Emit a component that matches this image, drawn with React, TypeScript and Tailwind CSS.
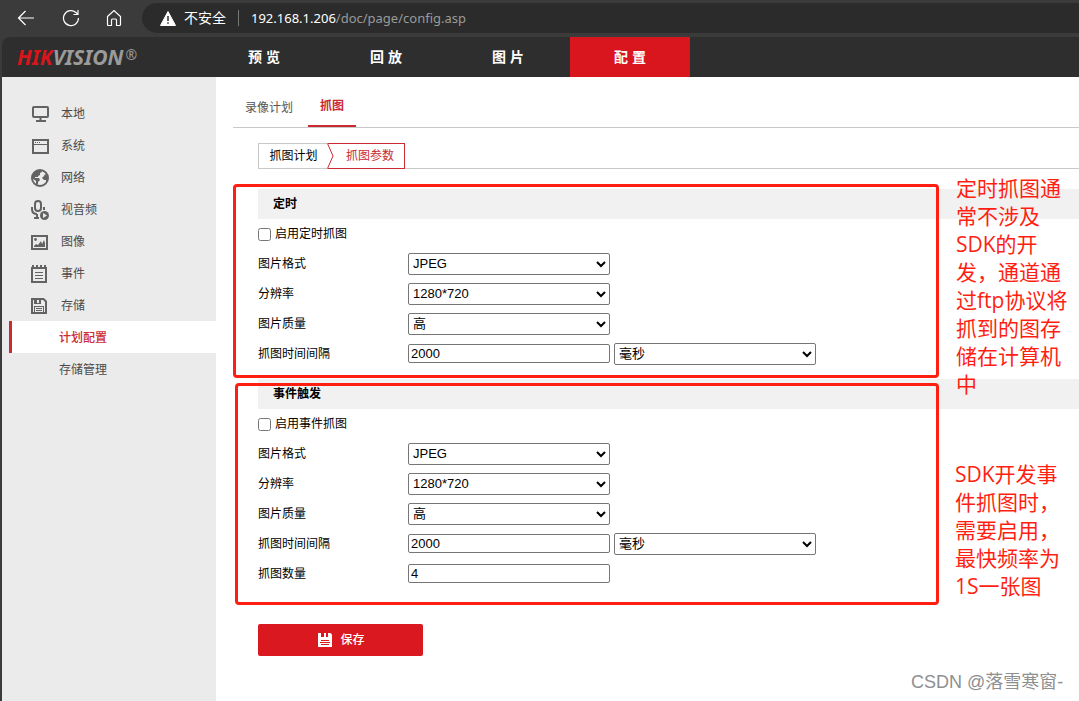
import type { ReactNode } from 'react';

const TOP_NAV = [
  { label: '预 览', active: false },
  { label: '回 放', active: false },
  { label: '图 片', active: false },
  { label: '配 置', active: true },
];

const FloppyIcon = () => (
  <svg width="16" height="16" viewBox="0 0 16 16" fill="none" stroke="currentColor" strokeWidth="2">
    <path d="M1 1h11.5L15 3.5V15H1z" />
    <path d="M3 1h7v5H3z" fill="currentColor" stroke="none" />
    <path d="M6 2h2v3H6z" fill="#ebebeb" stroke="none" />
    <path d="M3 8.5h10M3.5 8v6M12.5 8v6M5 10.5h6M5 12.5h6" strokeWidth="1" />
  </svg>
);

const MENU: { label: string; icon: ReactNode }[] = [
  {
    label: '本地',
    icon: (
      <svg width="18" height="18" viewBox="0 0 18 18" fill="none" stroke="currentColor" strokeWidth="2">
        <rect x="2" y="2" width="15" height="10" rx="1" />
        <path d="M9.5 12v4M5 16h10" />
      </svg>
    ),
  },
  {
    label: '系统',
    icon: (
      <svg width="18" height="18" viewBox="0 0 18 18" fill="none" stroke="currentColor" strokeWidth="2">
        <rect x="2" y="3" width="15" height="13" />
        <path d="M2 7.5h15M4 5.5h1M6 5.5h1M8 5.5h1" strokeWidth="1" />
      </svg>
    ),
  },
  {
    label: '网络',
    icon: (
      <svg width="18" height="18" viewBox="0 0 18 18" fill="currentColor">
        <circle cx="9" cy="9" r="8" fill="none" stroke="currentColor" strokeWidth="2" />
        <path d="M1 8l1-4 4-3h4l1 2-2 1v2L7 7v1H4v1h4l1 2-2 2v3l-2-1v-3L1 9z" />
        <path d="M17 7l-3-2-1 2-2 2 2 2h2v3l2-3z" />
      </svg>
    ),
  },
  {
    label: '视音频',
    icon: (
      <svg width="18" height="20" viewBox="0 0 18 20" fill="none" stroke="currentColor" strokeWidth="2">
        <rect x="4" y="1" width="6" height="10" rx="3" />
        <path d="M1 7v2c0 3 2 5 5 5M13 7v3M6 14v4M3 18h5" />
        <circle cx="13.5" cy="15.5" r="4.5" fill="currentColor" stroke="none" />
        <path d="M12 13v5l4-2.5z" fill="#ebebeb" stroke="none" />
      </svg>
    ),
  },
  {
    label: '图像',
    icon: (
      <svg width="18" height="18" viewBox="0 0 18 18" fill="none" stroke="currentColor" strokeWidth="2">
        <rect x="1" y="3" width="15" height="13" />
        <path d="M3 14v-1l2-2 2 1 3-4 1 3 2-4 1 3v4z" fill="currentColor" stroke="none" />
        <circle cx="4.5" cy="6.5" r="1.4" fill="currentColor" stroke="none" />
      </svg>
    ),
  },
  {
    label: '事件',
    icon: (
      <svg width="18" height="18" viewBox="0 0 18 18" fill="none" stroke="currentColor" strokeWidth="2">
        <path d="M1 3h14v14H1z" />
        <path d="M2 0v3M6 0v3M10 0v3M14 0v3" />
        <path d="M4 7.5h8M4 10.5h8M4 13.5h8" strokeWidth="1" />
      </svg>
    ),
  },
  { label: '存储', icon: <FloppyIcon /> },
];

function BrowserBar() {
  return (
    <div className="flex h-[37px] items-start bg-[#3b3b3b] text-white">
      <div className="flex h-9 w-[142px] shrink-0 items-center justify-between pl-[17px] pr-5">
        <button type="button" aria-label="后退">
          <svg width="18" height="16" viewBox="0 0 18 16" fill="none" stroke="currentColor" strokeWidth="1.2">
            <path d="M17 8H1.5M8.5 1l-7 7 7 7" />
          </svg>
        </button>
        <button type="button" aria-label="刷新">
          <svg width="18" height="18" viewBox="0 0 18 18" fill="none" stroke="currentColor" strokeWidth="1.2">
            <path d="M16.5 9A7.5 7.5 0 1 1 14 3.5l2 2M16 1v4.500h-4.500" />
          </svg>
        </button>
        <button type="button" aria-label="主页">
          <svg width="16" height="18" viewBox="0 0 16 18" fill="none" stroke="currentColor" strokeWidth="1.2">
            <path d="M1.5 7.5L8 1.5l6.5 6v8q0 1-1 1h-3V11q0-1-1-1h-3q-1 0-1 1v5.5h-3q-1 0-1-1z" />
          </svg>
        </button>
      </div>
      <div className="mt-[3px] flex h-[30px] flex-1 items-center rounded-l-full bg-[#2b2b2b] pl-[18px] text-sm">
        <svg width="16" height="15" viewBox="0 0 16 15">
          <path d="M8 .5L15.5 14.5H.5z" fill="#fff" stroke="#fff" strokeLinejoin="round" />
          <path d="M8 5v5M8 11.3v1.5" stroke="#2b2b2b" strokeWidth="1.5" />
        </svg>
        <span className="ml-2">不安全</span>
        <span className="mx-3 h-4 w-px bg-[#777]" />
        <span className="font-['Noto_Sans',sans-serif] text-[13px]">
          192.168.1.206<span className="text-[#9a9a9a]">/doc/page/config.asp</span>
        </span>
      </div>
    </div>
  );
}

function Header() {
  return (
    <header className="flex h-10 rounded-tl-lg bg-[#2e2e2e] text-white">
      <a href="#" className="flex w-[202px] shrink-0 items-center pl-[15px] font-['Noto_Sans',sans-serif] text-[21px] font-bold italic text-[#9b9b9b]">
        <span className="text-[#d7151c]">HIK</span>VISION
        <span className="ml-0.5 self-start pt-2 text-sm font-normal not-italic">®</span>
      </a>
      <nav className="flex gap-0.5 text-sm font-bold">
        {TOP_NAV.map((item) => (
          <a
            key={item.label}
            href="#"
            className={`flex w-[120px] items-center justify-center ${item.active ? 'bg-[#d9161d]' : ''}`}
          >
            {item.label}
          </a>
        ))}
      </nav>
    </header>
  );
}

function Sidebar() {
  return (
    <aside className="w-[214px] shrink-0 bg-[#ebebeb] pt-5 text-[#4a4a4a]">
      {MENU.map((item) => (
        <a key={item.label} href="#" className="flex h-8 items-center gap-3 pl-[29px] pt-0.5">
          <span className="flex w-[18px] text-[#636363]">{item.icon}</span>
          {item.label}
        </a>
      ))}
      <a href="#" className="ml-[7px] flex h-8 items-center border-l-3 border-[#cb2a31] bg-white pl-[47px] pt-0.5 font-medium text-[#cb2a31]">
        计划配置
      </a>
      <a href="#" className="flex h-8 items-center pl-[57px] pt-0.5">
        存储管理
      </a>
    </aside>
  );
}

function Select({ id, label, value }: { id?: string; label?: string; value: string }) {
  return (
    <select
      id={id}
      aria-label={label}
      defaultValue={value}
      className="h-[22px] w-[202px] rounded-[2px] border border-[#767676] bg-white pb-0.5 text-[13px]"
    >
      <option>{value}</option>
    </select>
  );
}

function TextInput({ id, value }: { id: string; value: string }) {
  return (
    <input
      id={id}
      type="text"
      defaultValue={value}
      className="mb-px h-[19px] w-[202px] rounded-[2px] border border-[#767676] bg-white px-0.5 text-[13px]"
    />
  );
}

function Row({ id, label, children }: { id: string; label: string; children: ReactNode }) {
  return (
    <div className="flex h-[30px] items-center">
      <label htmlFor={id} className="w-[150px] shrink-0">
        {label}
      </label>
      <div className="flex items-center gap-1">{children}</div>
    </div>
  );
}

type CaptureSectionProps = {
  id: string;
  title: string;
  enableLabel: string;
  children?: ReactNode;
};

function CaptureSection({ id, title, enableLabel, children }: CaptureSectionProps) {
  return (
    <section>
      <h2 className="flex h-[30px] items-center bg-[#f1f1f1] pl-[15px] font-bold">{title}</h2>
      <div className="flex h-[30px] items-center gap-1">
        <input id={`${id}-enable`} type="checkbox" className="mt-px h-[13px] w-[13px]" />
        <label htmlFor={`${id}-enable`}>{enableLabel}</label>
      </div>
      <Row id={`${id}-format`} label="图片格式">
        <Select id={`${id}-format`} value="JPEG" />
      </Row>
      <Row id={`${id}-resolution`} label="分辨率">
        <Select id={`${id}-resolution`} value="1280*720" />
      </Row>
      <Row id={`${id}-quality`} label="图片质量">
        <Select id={`${id}-quality`} value="高" />
      </Row>
      <Row id={`${id}-interval`} label="抓图时间间隔">
        <TextInput id={`${id}-interval`} value="2000" />
        <Select label="时间单位" value="毫秒" />
      </Row>
      {children}
    </section>
  );
}

function Config() {
  return (
    <main className="min-w-0 flex-1 bg-white pl-[17px] pt-2.5 text-black">
      <div className="flex h-[41px] border-b border-[#c8c8c8]">
        <a href="#" className="flex h-10 w-[75px] items-center pl-3 pt-0.5 text-[#555]">
          录像计划
        </a>
        <a href="#" className="flex h-10 w-12 items-center justify-center border-b-2 border-[#cb2a31] font-bold text-[#cb2a31]">
          抓图
        </a>
      </div>

      <div className="pl-[25px] pt-[15px]">
        <div className="mb-5 flex h-[26px]">
          <button type="button" className="w-[70px] border border-r-0 border-[#c8c8c8]">
            抓图计划
          </button>
          <button type="button" className="relative w-[77px] border border-l-0 border-[#cb2a31] pl-2 text-[#cb2a31]">
            <svg className="absolute -left-px -top-px" width="7" height="26" viewBox="0 0 7 26" fill="none" stroke="#cb2a31">
              <path d="M.5 .5L6 13L.5 25.5" />
            </svg>
            抓图参数
          </button>
          <div className="flex-1 border-b border-[#c8c8c8]" />
        </div>

        <CaptureSection id="timing" title="定时" enableLabel="启用定时抓图" />
        <div className="h-2.5" />
        <CaptureSection id="event" title="事件触发" enableLabel="启用事件抓图">
          <Row id="event-count" label="抓图数量">
            <TextInput id="event-count" value="4" />
          </Row>
        </CaptureSection>

        <button type="button" className="mt-[35px] flex h-8 w-[165px] items-center justify-center gap-2 rounded-[2px] bg-[#d9191f] pl-0.5 font-medium text-white">
          <svg width="14" height="14" viewBox="0 0 14 14" fill="currentColor">
            <path d="M0 0h12.5L14 1.5V14H0z" />
            <path d="M3 0h3v4H3zM8 0h2v4H8zM3 7h8v1H3zM2 9h10v1H2zM3 11h8v1H3z" fill="#d9191f" />
          </svg>
          保存
        </button>
      </div>
    </main>
  );
}

// Hand-drawn notes that float over the page
function Annotations() {
  return (
    <div className="pointer-events-none font-['Open_Sans','Noto_Sans_CJK_SC',sans-serif] text-[21px] leading-7 text-[#ff1f12]">
      <div className="absolute left-[233px] top-[184px] h-[194px] w-[706px] rounded border-3 border-[#ff1f12]" />
      <div className="absolute left-[235px] top-[383px] h-[222px] w-[704px] rounded border-3 border-[#ff1f12]" />
      <p className="absolute left-[956px] top-[174px] whitespace-nowrap">
        定时抓图通<br />
        常不涉及<br />
        SDK的开<br />
        发，通道通<br />
        过ftp协议将<br />
        抓到的图存<br />
        储在计算机<br />
        中
      </p>
      <p className="absolute left-[955px] top-[460px] whitespace-nowrap">
        SDK开发事<br />
        件抓图时，<br />
        需要启用，<br />
        最快频率为<br />
        1S一张图
      </p>
      <p className="absolute left-[911px] top-[668px] whitespace-nowrap font-['Liberation_Sans','Noto_Sans_CJK_SC',sans-serif] text-lg text-[#8f8f8f]">
        CSDN @落雪寒窗-
      </p>
    </div>
  );
}

export default function App() {
  return (
    <div className="relative flex min-h-screen flex-col overflow-hidden bg-[#3b3b3b] font-['Liberation_Sans','Noto_Sans_CJK_SC',sans-serif] text-xs">
      <BrowserBar />
      <div className="flex flex-1 flex-col pl-0.5">
        <Header />
        <div className="flex flex-1">
          <Sidebar />
          <Config />
        </div>
      </div>
      <Annotations />
    </div>
  );
}
